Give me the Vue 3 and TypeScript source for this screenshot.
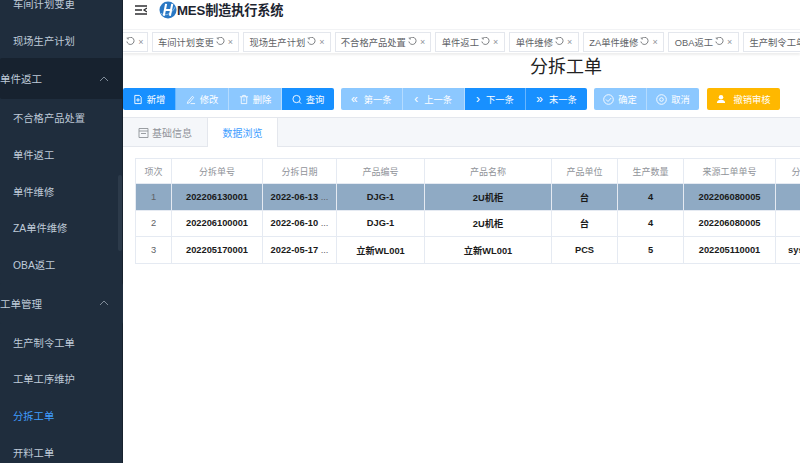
<script setup lang="ts">
interface MenuItem { label: string; kind: 'item' | 'group' | 'active' }
const menu: MenuItem[] = [
  { label: '车间计划变更', kind: 'item' },
  { label: '现场生产计划', kind: 'item' },
  { label: '单件返工', kind: 'group' },
  { label: '不合格产品处置', kind: 'item' },
  { label: '单件返工', kind: 'item' },
  { label: '单件维修', kind: 'item' },
  { label: 'ZA单件维修', kind: 'item' },
  { label: 'OBA返工', kind: 'item' },
  { label: '工单管理', kind: 'group' },
  { label: '生产制令工单', kind: 'item' },
  { label: '工单工序维护', kind: 'item' },
  { label: '分拆工单', kind: 'active' },
  { label: '开料工单', kind: 'item' },
]
const tags = [
  { label: '', w: 25 },
  { label: '车间计划变更', w: 87 },
  { label: '现场生产计划', w: 88 },
  { label: '不合格产品处置', w: 96 },
  { label: '单件返工', w: 70 },
  { label: '单件维修', w: 70 },
  { label: 'ZA单件维修', w: 81 },
  { label: 'OBA返工', w: 71 },
  { label: '生产制令工单', w: 88 },
]
const headers = ['项次', '分拆单号', '分拆日期', '产品编号', '产品名称', '产品单位', '生产数量', '来源工单单号', '分拆人员']
const rows = [
  ['1', '202206130001', '2022-06-13', 'DJG-1', '2U机柜', '台', '4', '202206080005', ''],
  ['2', '202206100001', '2022-06-10', 'DJG-1', '2U机柜', '台', '4', '202206080005', ''],
  ['3', '202205170001', '2022-05-17', '立新WL001', '立新WL001', 'PCS', '5', '202205110001', 'sysadmin'],
]
const widths = [36, 91, 74, 88, 127, 66, 66, 92, 68]
</script>

<template>
  <div class="app">
    <aside class="side">
      <ul class="menu">
        <li v-for="(m, i) in menu" :key="i" class="menu-row" :class="m.kind">
          <span>{{ m.label }}</span>
          <svg v-if="m.kind === 'group'" class="caret" width="10" height="6" viewBox="0 0 10 6"><path d="M1 5l4-4 4 4" fill="none" stroke="currentColor" stroke-width="1"/></svg>
        </li>
      </ul>
      <div class="thumb"></div>
    </aside>
    <main class="main">
      <header class="top">
        <svg class="fold" width="12" height="10" viewBox="0 0 12 10"><path d="M0 1h12M0 5h7M0 9h12M12 3l-3 2 3 2" fill="none" stroke="#303133" stroke-width="1.300"/></svg>
        <svg class="logo" width="18" height="18" viewBox="0 0 19 19">
          <circle cx="9.500" cy="9.500" r="9" fill="#2a78c4"/>
          <path d="M2 13C6 16 13 15 17.500 5.500" fill="none" stroke="#8fc0ea" stroke-width="1"/>
          <path d="M7.500 3L5 15.500M14 3l-2.500 12.500M6 9.500h7" stroke="#fff" stroke-width="2.200" fill="none"/>
        </svg>
        <span class="brand">MES制造执行系统</span>
      </header>
      <nav class="tags">
        <div v-for="(t, i) in tags" :key="i" class="tag" :class="{ cut: !t.label }" :style="{ width: t.w + 'px' }">
          <span v-if="t.label">{{ t.label }}</span>
          <svg width="9" height="9" viewBox="0 0 9 9"><path d="M2 1.200A3.600 3.600 0 1 1 .9 4.500M.7 1l1.300.2.2 1.400" fill="none" stroke="#606266" stroke-width=".8"/></svg>
          <span class="x">×</span>
        </div>
      </nav>
      <h1 class="title">分拆工单</h1>
      <div class="toolbar">
        <div class="group g1">
          <button class="btn on"><svg width="10" height="11" viewBox="0 0 11 11"><path d="M2 1h5l2 2v7H2zM5.500 4v4M3.500 6h4" fill="none" stroke="#fff"/></svg>新增</button>
          <button class="btn off"><svg width="10" height="11" viewBox="0 0 11 11"><path d="M2 8l5-6 1.500 1.200-5 6-2 .6zM5 10h5" fill="none" stroke="#fff" stroke-width=".9"/></svg>修改</button>
          <button class="btn off"><svg width="10" height="11" viewBox="0 0 11 11"><path d="M1 2.500h9M4 2.500V1h3v1.500M2.500 2.500V10h6V2.500M5.500 4.500v3" fill="none" stroke="#fff" stroke-width=".9"/></svg>删除</button>
          <button class="btn on"><svg width="10" height="11" viewBox="0 0 11 11"><circle cx="5" cy="5" r="4" fill="none" stroke="#fff"/><path d="M8 8l2 2" stroke="#fff"/></svg>查询</button>
        </div>
        <div class="group g2">
          <button class="btn off"><span class="ar">«</span>第一条</button>
          <button class="btn off"><span class="ar">‹</span>上一条</button>
          <button class="btn on"><span class="ar">›</span>下一条</button>
          <button class="btn on"><span class="ar">»</span>末一条</button>
        </div>
        <div class="group g3">
          <button class="btn off"><svg width="11" height="11" viewBox="0 0 11 11"><circle cx="5.500" cy="5.500" r="4.800" fill="none" stroke="#fff" stroke-width=".9"/><path d="M3 5.500l2 2 3.200-3.500" fill="none" stroke="#fff" stroke-width=".9"/></svg>确定</button>
          <button class="btn off"><svg width="11" height="11" viewBox="0 0 11 11"><circle cx="5.500" cy="5.500" r="4.800" fill="none" stroke="#fff" stroke-width=".9"/><circle cx="5.500" cy="5.500" r="1.800" fill="none" stroke="#fff" stroke-width=".9"/></svg>取消</button>
        </div>
        <button class="btn warn"><svg width="10" height="10" viewBox="0 0 11 11"><circle cx="5.500" cy="3.500" r="2.500" fill="#fff"/><path d="M1 10c0-3 2-3.500 4.500-3.500S10 7 10 10z" fill="#fff"/></svg>撤销审核</button>
      </div>
      <div class="tabs">
        <div class="tab"><svg width="11" height="11" viewBox="0 0 11 11"><path d="M1 1.500h9v9H1zM1 4h9M3 6.500h5" fill="none" stroke="#909399" stroke-width=".9"/></svg>基础信息</div>
        <div class="tab active">数据浏览</div>
      </div>
      <div class="pane">
        <table class="grid">
          <colgroup><col v-for="(w, i) in widths" :key="i" :style="{ width: w + 'px' }" /></colgroup>
          <thead><tr><th v-for="h in headers" :key="h">{{ h }}</th></tr></thead>
          <tbody>
            <tr v-for="(r, i) in rows" :key="i" :class="{ current: i === 0 }">
              <td v-for="(c, j) in r" :key="j" :class="{ idx: j === 0 }">{{ c }}<span v-if="j === 2" class="more"> ...</span></td>
            </tr>
          </tbody>
        </table>
      </div>
    </main>
  </div>
</template>

<style>
html, body { margin: 0; overflow: hidden; }
</style>

<style scoped>
.app { width: 800px; height: 463px; display: flex; overflow: hidden; font-family: "Liberation Sans", "Noto Sans CJK SC", sans-serif; font-size: 12px; color: #303133; background: #fff; }
.side { position: relative; width: 123px; flex: none; background: #1f2d3d; overflow: hidden; box-shadow: inset -1px 0 0 #17222e; }
.menu { list-style: none; margin: -15px 0 0; padding: 0; }
.menu-row { display: flex; align-items: center; justify-content: space-between; height: 36.700px; padding: 0 13px; color: #bfcbd9; font-size: 10.300px; white-space: nowrap; }
.menu-row.group { height: 41px; padding-left: 0; background: #17222f; font-size: 10.500px; }
.menu-row.group:nth-child(9) { background: #1f2d3d; }
.menu-row.active { color: #409eff; }
.caret { color: #7f8b98; margin-right: 1px; }
.thumb { position: absolute; left: 118px; top: 175px; width: 4px; height: 76px; background: #2c3a4a; border-radius: 2px; }
.main { flex: 1; min-width: 0; display: flex; flex-direction: column; overflow: hidden; }
.top { height: 19px; padding: 1px 0 9px 12px; margin-top: -1px; flex: none; display: flex; align-items: center; box-sizing: content-box; margin-bottom: 1px; }
.fold { margin-right: 12px; }
.logo { margin-right: 0; }
.brand { font-size: 13.200px; font-weight: 700; color: #1c2430; letter-spacing: -.15px; }
.tags { height: 24px; box-sizing: border-box; flex: none; display: flex; gap: 4px; align-items: center; overflow: hidden; box-shadow: 0 2px 2px rgba(0,0,0,.07); border-top: 1px solid #f2f3f5; }
.tag { height: 20px; flex: none; box-sizing: border-box; display: flex; align-items: center; justify-content: center; gap: 2px; border: 1px solid #e4e7ed; font-size: 9.300px; color: #606266; white-space: nowrap; overflow: hidden; background: #fff; }
.tag.cut { border-left: 0; }
.x { color: #909399; font-size: 9px; margin-left: 1px; }
.title { margin: 0; height: 33px; line-height: 29px; flex: none; text-align: center; font-size: 18px; font-weight: 400; color: #222; width: 886px; box-sizing: border-box; }
.toolbar { display: flex; height: 22px; flex: none; margin-top: 2px; gap: 7px; }
.group { display: flex; border-radius: 2px; overflow: hidden; flex: none; }
.g1 { width: 211px; }
.g2 { width: 246px; }
.g3 { width: 105px; }
.btn { flex: 1; border: 0; border-right: 1px solid rgba(255,255,255,.35); padding: 0; display: flex; align-items: center; justify-content: center; gap: 4px; color: #fff; font: inherit; font-size: 9.300px; height: 22px; white-space: nowrap; }
.btn:last-child { border-right: 0; }
.on { background: #1890ff; }
.off { background: #8cc8ff; }
.warn { width: 73px; flex: none; margin-left: 1px; background: #ffb800; border-radius: 2px; gap: 7px; }
.ar { font-size: 12px; line-height: 1; margin-right: 2px; }
.tabs { display: flex; height: 30px; margin-top: 7px; flex: none; background: #f5f7fa; border-top: 1px solid #e4e7ed; border-bottom: 1px solid #e4e7ed; box-sizing: border-box; }
.tab { width: 84px; display: flex; align-items: center; justify-content: center; gap: 3px; font-size: 10px; color: #909399; }
.tab.active { width: 71px; margin-bottom: -1px; background: #fff; color: #409eff; border-left: 1px solid #e4e7ed; border-right: 1px solid #e4e7ed; box-sizing: border-box; }
.pane { flex: 1; padding: 11px 0 0 12px; overflow: hidden; }
.grid { border-collapse: collapse; table-layout: fixed; width: 708px; }
.grid th, .grid td { border: 1px solid #e5eaf2; text-align: center; overflow: hidden; white-space: nowrap; padding: 0; }
.grid th { height: 24px; font-size: 9px; font-weight: 400; color: #909399; }
.grid td { height: 25.500px; font-size: 9.300px; font-weight: 700; color: #1a1a1a; }
.grid td.idx { font-weight: 400; color: #606266; }
.grid tr.current td { background: #8faac4; }
.more { color: #606266; font-weight: 400; }
</style>
